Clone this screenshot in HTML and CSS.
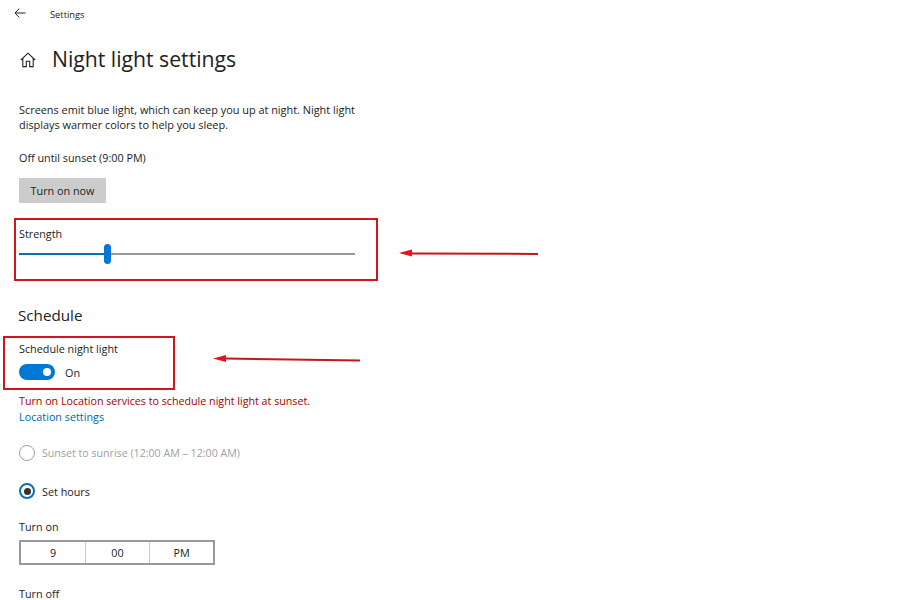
FILE: index.html
```html
<!DOCTYPE html>
<html lang="en">

<head>
    <meta charset="utf-8">
    <title>Night light settings</title>
    <link rel="stylesheet" href="styles.css">
</head>

<body>
    <header class="topbar">
        <svg class="back_icon" width="12" height="10" viewBox="0 0 12 10">
            <path d="M5.2 0.6 L1 5 L5.2 9.4 M1 5 H11.5" fill="none" stroke="#222" stroke-width="1"/>
        </svg>
        <span class="topbar_title">Settings</span>
    </header>
    <main>
        <div class="page_head">
            <svg class="home_icon" width="16" height="16" viewBox="0 0 16 16">
                <path d="M0.8 8 L8 1.2 L15.2 8 M2.8 6.4 V14.6 H6.3 V9.3 H9.7 V14.6 H13.2 V6.4" fill="none" stroke="#222" stroke-width="1.1"/>
            </svg>
            <h1>Night light settings</h1>
        </div>
        <p class="intro">Screens emit blue light, which can keep you up at night. Night light displays warmer colors to help you sleep.</p>
        <p class="status">Off until sunset (9:00 PM)</p>
        <button class="turn_on">Turn on now</button>
        <p class="label strength_label">Strength</p>
        <div class="slider">
            <div class="slider_fill"></div>
            <div class="slider_thumb"></div>
        </div>
        <h2>Schedule</h2>
        <p class="label">Schedule night light</p>
        <div class="toggle_row">
            <div class="toggle"><div class="toggle_knob"></div></div>
            <span>On</span>
        </div>
        <p class="warning">Turn on Location services to schedule night light at sunset.</p>
        <a class="link" href="#">Location settings</a>
        <div class="radio_row disabled">
            <div class="radio"></div>
            <span>Sunset to sunrise (12:00 AM – 12:00 AM)</span>
        </div>
        <div class="radio_row checked">
            <div class="radio"><div class="radio_dot"></div></div>
            <span>Set hours</span>
        </div>
        <p class="label turn_on_label">Turn on</p>
        <div class="time_box">
            <div>9</div>
            <div>00</div>
            <div>PM</div>
        </div>
        <p class="label turn_off_label">Turn off</p>
    </main>

    <!-- annotations on top of the screenshot -->
    <div class="mark mark_strength"></div>
    <div class="mark mark_schedule"></div>
    <svg class="arrows" width="900" height="600" viewBox="0 0 900 600">
        <path d="M538 254 L412 253.4" stroke="#c4161c" stroke-width="2" fill="none"/>
        <path d="M399 253 L412 249.5 L412 256.5 Z" fill="#e8101a"/>
        <path d="M360 360.5 L226 358.6" stroke="#c4161c" stroke-width="2" fill="none"/>
        <path d="M213 358.5 L226 355 L226 362 Z" fill="#e8101a"/>
    </svg>
</body>

</html>
```

FILE: styles.css
```css
* {
    box-sizing: border-box;
}

html,
body {
    height: 600px;
    overflow: hidden;
}

body {
    margin: 0;
    background: white;
    color: #222;
    font-family: "Open Sans", sans-serif;
    font-size: 10.8px;
    line-height: 15px;
}

p {
    margin: 0;
}

.topbar {
    display: flex;
    align-items: center;
    height: 26px;
    padding-left: 14px;
}

.topbar_title {
    margin-left: 24px;
    margin-top: 2px;
    font-size: 9.3px;
}

main {
    padding-left: 19px;
}

.page_head {
    display: flex;
    align-items: center;
    height: 34px;
    margin-top: 16px;
}

.home_icon {
    margin-left: 1px;
    margin-top: 1px;
}

h1 {
    margin: 0 0 0 16px;
    font-size: 21.2px;
    font-weight: 400;
    line-height: 34px;
}

.intro {
    width: 345px;
    margin-top: 26px;
    font-size: 10.9px;
}

.status {
    margin-top: 18px;
}

.turn_on {
    display: block;
    width: 87px;
    height: 25px;
    margin-top: 13px;
    padding: 0;
    border: 0;
    background: #cccccc;
    color: #222;
    font-family: inherit;
    font-size: 10.8px;
}

.strength_label {
    margin-top: 23px;
}

.slider {
    position: relative;
    width: 336px;
    height: 2px;
    margin-top: 12px;
    background: #999;
}

.slider_fill {
    width: 88px;
    height: 2px;
    background: #0f6fb5;
}

.slider_thumb {
    position: absolute;
    left: 85px;
    top: -9px;
    width: 7px;
    height: 20px;
    border-radius: 4px;
    background: #0078d7;
}

h2 {
    margin: 50px 0 0 -1px;
    font-size: 15.2px;
    font-weight: 400;
    line-height: 20px;
}

.label {
    line-height: 15px;
}

h2 + .label {
    margin-top: 16px;
}

.toggle_row {
    display: flex;
    align-items: center;
    height: 16px;
    margin-top: 8px;
}

.toggle_row span {
    margin-left: 10px;
    margin-top: 1px;
}

.toggle {
    display: flex;
    justify-content: flex-end;
    align-items: center;
    width: 36px;
    height: 16px;
    padding-right: 4px;
    border-radius: 8px;
    background: #0078d7;
}

.toggle_knob {
    width: 8px;
    height: 8px;
    border-radius: 50%;
    background: white;
}

.warning {
    margin-top: 14px;
    color: #a80000;
    font-size: 10.7px;
}

.link {
    display: block;
    color: #0067a8;
    text-decoration: none;
}

.radio_row {
    display: flex;
    align-items: center;
    gap: 7px;
    height: 16px;
}

.radio {
    display: flex;
    justify-content: center;
    align-items: center;
    width: 16px;
    height: 16px;
    border: 1.5px solid #333;
    border-radius: 50%;
}

.radio_dot {
    width: 7px;
    height: 7px;
    border-radius: 50%;
    background: #333;
}

.disabled {
    margin-top: 21px;
    color: #a0a0a0;
    font-size: 10.65px;
}

.disabled .radio {
    border-color: #a0a0a0;
}

.checked {
    margin-top: 22px;
}

.checked .radio {
    border: 2px solid #0f6fb5;
}

.turn_on_label {
    margin-top: 20px;
}

.time_box {
    display: grid;
    grid-template-columns: repeat(3, 1fr);
    width: 196px;
    height: 25px;
    margin-top: 6px;
    border: 2px solid #999;
}

.time_box div {
    display: flex;
    justify-content: center;
    align-items: center;
    border-left: 1px solid #ccc;
}

.time_box div:first-child {
    border-left: 0;
}

.turn_off_label {
    margin-top: 24px;
    line-height: 10px;
}

.mark {
    position: absolute;
    border: 2px solid #d2141c;
}

.mark_strength {
    left: 14px;
    top: 218px;
    width: 364px;
    height: 63px;
}

.mark_schedule {
    left: 3px;
    top: 336px;
    width: 172px;
    height: 54px;
}

.arrows {
    position: absolute;
    left: 0;
    top: 0;
}
```
